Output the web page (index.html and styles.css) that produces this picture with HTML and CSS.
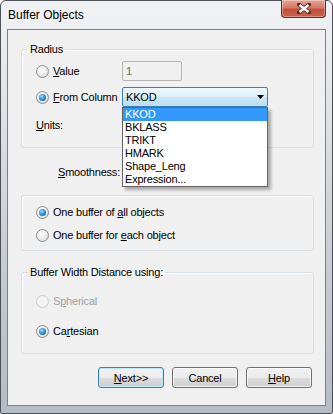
FILE: index.html
```html
<!DOCTYPE html>
<html lang="en">
  <head>
    <meta charset="UTF-8" />
    <meta name="viewport" content="width=device-width, initial-scale=1.0" />
    <title>Buffer Objects</title>
    <link rel="stylesheet" href="styles.css">
  </head>
  <body>
    <div class="window">
      <div class="titlebar">
        <span class="title">Buffer Objects</span>
        <div class="close">
          <svg width="14" height="11" viewBox="0 0 14 11">
            <path d="M2 1.5 L12 9.5 M12 1.5 L2 9.5" stroke="#5a2a22" stroke-width="4" stroke-linecap="square" />
            <path d="M2.5 2 L11.5 9 M11.5 2 L2.5 9" stroke="#fff" stroke-width="2.4" />
          </svg>
        </div>
      </div>

      <div class="client">
        <fieldset class="group radius">
          <legend>Radius</legend>
          <div class="radius-grid">
            <label class="opt"><span class="radio"></span><span><u>V</u>alue</span></label>
            <input class="text" type="text" value="1" disabled>

            <label class="opt"><span class="radio on"></span><span><u>F</u>rom Column</span></label>
            <div class="combo-wrap">
              <div class="combo">
                <span>KKOD</span>
                <svg width="7" height="4" viewBox="0 0 7 4"><path d="M0 0 H7 L3.5 4 Z" fill="#000" /></svg>
              </div>
              <ul class="droplist">
                <li class="sel">KKOD</li>
                <li>BKLASS</li>
                <li>TRIKT</li>
                <li>HMARK</li>
                <li>Shape_Leng</li>
                <li>Expression...</li>
              </ul>
            </div>

            <span class="lbl"><u>U</u>nits:</span>
          </div>
        </fieldset>

        <div class="smooth"><u>S</u>moothness:</div>

        <fieldset class="group buffers">
          <label class="opt"><span class="radio on"></span><span>One buffer of <u>a</u>ll objects</span></label>
          <label class="opt"><span class="radio"></span><span>One buffer for <u>e</u>ach object</span></label>
        </fieldset>

        <fieldset class="group distance">
          <legend>Buffer Width Distance using:</legend>
          <label class="opt off"><span class="radio"></span><span>S<u>p</u>herical</span></label>
          <label class="opt"><span class="radio on"></span><span>Ca<u>r</u>tesian</span></label>
        </fieldset>

        <div class="buttons">
          <button class="btn default"><u>N</u>ext&gt;&gt;</button>
          <button class="btn">Cancel</button>
          <button class="btn"><u>H</u>elp</button>
        </div>
      </div>
    </div>
  </body>
</html>
```

FILE: styles.css
```css
body {
  margin: 0;
  background-color: #fff;
  font-family: "Liberation Sans", Arial, sans-serif;
  font-size: 11px;
  letter-spacing: -0.2px;
  color: #000;
}

.window {
  width: 333px;
  height: 414px;
  box-sizing: border-box;
  padding: 0 6px 7px 6px;
  border: 1px solid #4b5157;
  border-radius: 6px 6px 2px 2px;
  background: linear-gradient(#f1f2f4 0%, #e4e7ea 20%, #c9ced4 60%, #b6bcc3 100%);
  display: flex;
  flex-direction: column;
}

.titlebar {
  height: 28px;
  display: flex;
  align-items: flex-start;
  justify-content: space-between;
}

.title {
  font-size: 12px;
  letter-spacing: 0;
  margin: 7px 0 0 1px;
  color: #000;
}

.close {
  width: 45px;
  height: 18px;
  box-sizing: border-box;
  margin-top: -1px;
  border: 1px solid #6a2a20;
  border-top: none;
  border-radius: 0 0 4px 4px;
  background: linear-gradient(#e6a594 0%, #d47a66 45%, #c4503c 55%, #c8614c 100%);
  box-shadow: inset 0 0 0 1px rgba(255, 255, 255, 0.35);
  display: flex;
  align-items: center;
  justify-content: center;
}

.client {
  flex: 1;
  border: 1px solid #7b8188;
  background-color: #f0f0f0;
  display: flex;
  flex-direction: column;
}

.group {
  margin: 0 11px 0 13px;
  padding: 0 0 0 14px;
  min-width: 0;
  border: 1px solid #d5dfe5;
  border-radius: 3px;
  box-shadow: inset 1px 1px 0 #fff;
}

.group legend {
  margin-left: -8px;
  padding: 0 2px;
  line-height: 14px;
}

.radius {
  margin-top: 12px;
  padding-top: 5px;
  padding-bottom: 10px;
}

.radius-grid {
  display: grid;
  grid-template-columns: 86px 146px;
  grid-template-rows: 20px 20px 24px;
  row-gap: 6px;
  align-items: center;
}

.opt {
  display: flex;
  align-items: center;
  height: 16px;
}

.opt.off {
  color: #a0a0a0;
}

.radio {
  width: 13px;
  height: 13px;
  box-sizing: border-box;
  margin-right: 4px;
  border: 1px solid #8b8c8e;
  border-radius: 50%;
  background: radial-gradient(circle at 40% 35%, #ffffff 0%, #f0f0f0 40%, #cfcfcf 100%);
  display: flex;
  align-items: center;
  justify-content: center;
}

.radio.on::after {
  content: "";
  width: 7px;
  height: 7px;
  border-radius: 50%;
  background: radial-gradient(circle at 40% 35%, #a9e0ff 0%, #3a9be0 40%, #0b4f8a 100%);
}

.opt.off .radio {
  border-color: #cacaca;
  background: #f4f4f4;
}

.text {
  width: 60px;
  height: 20px;
  box-sizing: border-box;
  margin: 0;
  padding: 0 3px;
  border: 1px solid #b5b5b5;
  border-radius: 2px;
  background-color: #f0f0f0;
  font-family: inherit;
  font-size: 11px;
  color: #6d6d6d;
}

.combo-wrap {
  position: relative;
  height: 20px;
}

.combo {
  height: 20px;
  box-sizing: border-box;
  padding: 0 3px 0 3px;
  border: 1px solid #3c7fb1;
  border-radius: 2px;
  background: linear-gradient(#edf7fd 0%, #dff0fa 50%, #cbe7f7 51%, #bddff3 100%);
  display: flex;
  align-items: center;
  justify-content: space-between;
}

.droplist {
  position: absolute;
  top: 20px;
  left: 0;
  width: 146px;
  box-sizing: border-box;
  margin: 0;
  padding: 0;
  list-style: none;
  border: 1px solid #646464;
  background-color: #fff;
  box-shadow: 3px 3px 3px rgba(0, 0, 0, 0.3);
  z-index: 2;
}

.droplist li {
  height: 13px;
  line-height: 13px;
  padding-left: 2px;
}

.droplist li.sel {
  background-color: #3399ff;
  color: #fff;
}

.smooth {
  height: 20px;
  line-height: 20px;
  margin-top: 14px;
  padding-left: 50px;
}

.buffers {
  margin-top: 13px;
  padding-top: 8px;
  padding-bottom: 7px;
  display: flex;
  flex-direction: column;
  gap: 7px;
}

.distance {
  margin-top: 14px;
  padding-top: 14px;
  padding-bottom: 14px;
  display: flex;
  flex-direction: column;
  gap: 14px;
}

.buttons {
  margin-top: 13px;
  padding-right: 13px;
  display: flex;
  justify-content: flex-end;
  gap: 8px;
}

.btn {
  width: 66px;
  height: 21px;
  box-sizing: border-box;
  padding: 0;
  border: 1px solid #707070;
  border-radius: 3px;
  background: linear-gradient(#f2f2f2 0%, #ebebeb 50%, #dddddd 51%, #cfcfcf 100%);
  box-shadow: inset 0 0 0 1px rgba(255, 255, 255, 0.7);
  font-family: inherit;
  font-size: 11px;
  letter-spacing: -0.2px;
  color: #000;
}

.btn.default {
  border-color: #3c7fb1;
  box-shadow: inset 0 0 0 1px #bfe6fb;
}
```
